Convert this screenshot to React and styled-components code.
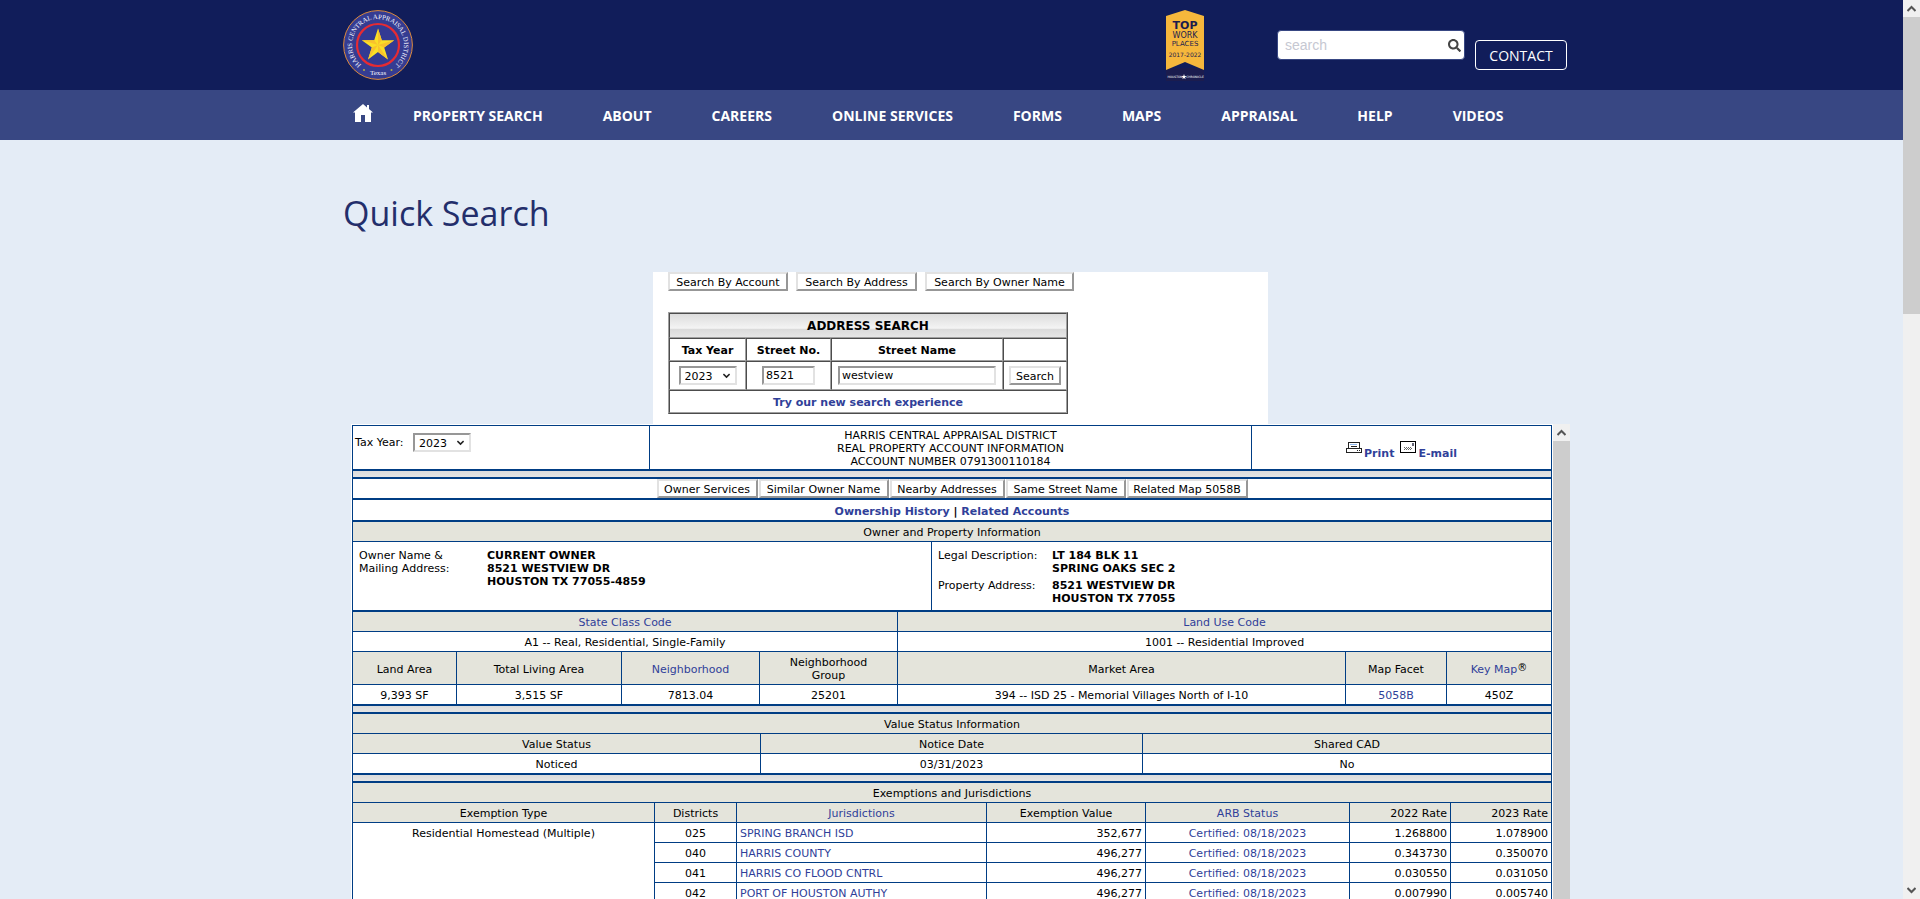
import styled, { createGlobalStyle } from "styled-components"
import { FaSearch } from "react-icons/fa"

const navy = "#111d5a"
const indigo = "#384783"
const sky = "#e4ecf6"
const line = "#003d84"
const sand = "#e4e4db"
const linkBlue = "#303f99"
const verdana = "Verdana, \"DejaVu Sans\", sans-serif"
const openSans = "\"Open Sans\", sans-serif"

const GlobalStyle = createGlobalStyle`
	* {
		box-sizing: border-box;
	}
	html, body, #root {
		height: 100%;
		margin: 0;
	}
	body {
		overflow: hidden;
		background: ${sky};
	}
	a {
		text-decoration: none;
	}
`

const Window = styled.div`
	display: flex;
	height: 100%;
	overflow: hidden;
`

const Page = styled.div`
	flex: 1;
	min-width: 0;
	overflow: hidden;
	font-family: ${openSans};
`

const Container = styled.div`
	display: flex;
	width: 1217px;
	max-width: 100%;
	margin: 0 auto;
`

const TopBar = styled.header`
	background: ${navy};
`

const TopInner = styled(Container)`
	height: 90px;
	padding-top: 10px;
	align-items: flex-start;
`

const TopTools = styled.div`
	display: flex;
	flex: 1;
	justify-content: flex-end;
	align-items: flex-start;
	margin-right: -7px;
`

const SearchForm = styled.form`
	display: flex;
	align-items: center;
	width: 188px;
	height: 30px;
	margin: 20px 10px 0 72px;
	padding: 0 3px 0 7px;
	border: 1px solid ${indigo};
	border-radius: 4px;
	background: #fff;
`

const SearchInput = styled.input`
	flex: 1;
	min-width: 0;
	padding: 0;
	border: 0;
	outline: 0;
	background: none;
	font: 14px/20px "Liberation Sans", Arial, sans-serif;

	&::placeholder {
		color: #c6c8d2;
	}
`

const IconButton = styled.button`
	display: flex;
	padding: 0;
	border: 0;
	background: none;
	color: #444;
	font-size: 13px;
`

const ContactLink = styled.a`
	width: 92px;
	height: 30px;
	margin-top: 30px;
	border: 1px solid #fff;
	border-radius: 4px;
	color: #fff;
	font-size: 14px;
	line-height: 30px;
	text-align: center;
`

const NavBar = styled.nav`
	background: ${indigo};
`

const NavInner = styled(Container)`
	height: 50px;
	padding: 2px 0 0 10px;
	gap: 60px;
	align-items: center;
`

const NavLink = styled.a`
	color: #fff;
	font-size: 14px;
	font-weight: 700;
	line-height: 20px;
	white-space: nowrap;
`

const HomeLink = styled.a`
	display: flex;
	margin: 0 -20px 6px 0;
`

const Main = styled.main`
	width: 1217px;
	max-width: 100%;
	margin: 0 auto;
`

const Title = styled.h1`
	margin: 0;
	padding: 49px 0 35px;
	color: #232e6b;
	font-size: 34px;
	font-weight: 400;
	line-height: 48px;
`

const Content = styled.div`
	width: 1219px;
	margin-left: 8px;
	font: 11px/13px ${verdana};
	color: #000;
`

const SearchPanel = styled.section`
	width: 615px;
	height: 152px;
	margin: 0 auto;
	padding: 0 15px;
	background: #fff;
`

const ModeButtons = styled.div`
	display: flex;
	gap: 8px;
	margin-bottom: 21px;
`

const OutsetButton = styled.button`
	width: ${(p) => p.$width}px;
	height: 19px;
	padding: 1px 0 0;
	border: 2px solid;
	border-color: #e2e2e2 #979797 #979797 #e2e2e2;
	background: #fff;
	color: #000;
	font: 11px/13px ${verdana};
	white-space: nowrap;
`

const SearchTable = styled.table`
	width: 400px;
	border-collapse: separate;
	border-spacing: 0;
	border: 1px solid;
	border-color: #a0a0a0 #4c4c4c #4c4c4c #a0a0a0;
	table-layout: fixed;
	text-align: center;

	th, td {
		height: 23px;
		padding: 1px 0 0;
		border: 1px solid;
		border-color: #4c4c4c #a0a0a0 #a0a0a0 #4c4c4c;
	}
	tr:first-child th {
		height: 25px;
		background: linear-gradient(#dcdcdc, #f4f4f4 62%, #dadada 66%, #e6e6e6);
		font-size: 12px;
	}
	tr:nth-child(3) td {
		height: 29px;
		padding: 0;
	}
`

const SelectBox = styled.span`
	position: relative;
	display: inline-block;
	width: 58px;
	height: 19px;
	vertical-align: middle;

	svg {
		position: absolute;
		top: 7px;
		right: 7px;
		pointer-events: none;
	}
`

const YearSelect = styled.select`
	appearance: none;
	width: 100%;
	height: 100%;
	padding: 1px 0 0 4px;
	border: 2px solid;
	border-color: #979797 #e2e2e2 #e2e2e2 #979797;
	border-radius: 0;
	background: #fff;
	color: #000;
	font: 11px/13px ${verdana};
	vertical-align: top;
`

const TextBox = styled.input`
	width: ${(p) => p.$width}px;
	height: 19px;
	padding: 0 2px;
	border: 2px solid;
	border-color: #979797 #e2e2e2 #e2e2e2 #979797;
	color: #000;
	font: 11px/13px ${verdana};
	vertical-align: middle;
`

const TextLink = styled.a`
	color: ${linkBlue};
	font-weight: ${(p) => (p.$bold ? 700 : 400)};
`

const Frame = styled.section`
	display: flex;
	background: #fff;
`

const Sheet = styled.div`
	flex: 1;
	min-width: 0;
	margin: 1px;
	border: 1px solid ${line};
	border-bottom: 0;
`

const Grid = styled.table`
	width: 100%;
	table-layout: fixed;
	border-collapse: separate;
	border-spacing: 0;
	border-bottom: 1px solid ${line};

	th, td {
		padding: 4px 3px 2px;
		border-bottom: 1px solid ${line};
		border-right: 1px solid ${line};
		font-weight: 400;
		text-align: center;
	}
	th {
		background: ${sand};
	}
	th:last-child, td:last-child {
		border-right: 0;
	}
`

const Cell = styled.td`
	&& {
		text-align: ${(p) => p.$align};
		vertical-align: top;
	}
`

const HeadCell = styled.th`
	&& {
		text-align: right;
	}
`

const Mark = styled.sup`
	font-size: 10px;
	line-height: 0;
	vertical-align: 2px;
`

const Spacer = styled.div`
	height: 8px;
	border-bottom: 2px solid ${line};
	background: linear-gradient(#dcdcdc, #e4e4e4);
`

const HeaderRow = styled.div`
	display: flex;
	height: 45px;
	border-bottom: 2px solid ${line};
	text-align: center;
`

const YearField = styled.div`
	display: flex;
	width: 297px;
	padding: 7px 2px 0;
	align-items: flex-start;
	border-right: 1px solid ${line};

	label {
		width: 58px;
		line-height: 20px;
		text-align: left;
	}
`

const Heading = styled.div`
	flex: 1;
	padding-top: 3px;
	border-right: 1px solid ${line};
`

const Actions = styled.div`
	display: flex;
	width: 299px;
	padding-top: 15px;
	justify-content: center;
	gap: 6px;

	a {
		display: flex;
		align-items: flex-start;
		gap: 2px;
		color: ${linkBlue};
		font-weight: 700;
	}
	span {
		padding-top: 6px;
	}
`

const ButtonRow = styled.div`
	display: flex;
	height: 21px;
	justify-content: center;
	gap: 1px;
	border-bottom: 2px solid ${line};
`

const LinkRow = styled.div`
	height: 22px;
	padding-top: 5px;
	border-bottom: 2px solid ${line};
	text-align: center;
	font-weight: 700;
`

const SectionTitle = styled.div`
	height: 20px;
	padding-top: 4px;
	border-bottom: 1px solid ${line};
	background: ${sand};
	text-align: center;
`

const OwnerRow = styled.div`
	display: flex;
	height: 70px;
	border-bottom: 2px solid ${line};
`

const Facts = styled.dl`
	display: grid;
	grid-template-columns: ${(p) => p.$label}px 1fr;
	width: ${(p) => p.$width};
	margin: 0;
	padding: 7px 6px;
	row-gap: 4px;
	align-content: start;
	border-right: ${(p) => (p.$divided ? `1px solid ${line}` : 0)};

	dd {
		margin: 0;
		font-weight: 700;
	}
`

const ScrollTrack = styled.div`
	display: flex;
	flex-direction: column;
	width: 17px;
	flex-shrink: 0;
	background: #f0f0f0;
`

const ScrollEnd = styled.div`
	display: flex;
	height: 17px;
	align-items: center;
	justify-content: center;
`

const Thumb = styled.div`
	flex: ${(p) => p.$size};
	background: #cdcdcd;
`

const Gap = styled.div`
	flex: ${(p) => p.$size};
`

const NAV = ["Property Search", "About", "Careers", "Online Services", "Forms", "Maps", "Appraisal", "Help", "Videos"]

const MODES = [["Search By Account", 120], ["Search By Address", 121], ["Search By Owner Name", 149]]

const TOOLS = [
	["Owner Services", 101],
	["Similar Owner Name", 130],
	["Nearby Addresses", 115],
	["Same Street Name", 120],
	["Related Map 5058B", 121]
]

const DISTRICTS = [
	["025", "SPRING BRANCH ISD", "352,677", "1.268800", "1.078900"],
	["040", "HARRIS COUNTY", "496,277", "0.343730", "0.350070"],
	["041", "HARRIS CO FLOOD CNTRL", "496,277", "0.030550", "0.031050"],
	["042", "PORT OF HOUSTON AUTHY", "496,277", "0.007990", "0.005740"]
]

function Seal() {
	return (
		<svg width="70" height="70" viewBox="0 0 70 70" role="img" aria-label="Harris Central Appraisal District, Texas">
			<defs>
				<path id="ring" d="M19.7 56A26 26 0 1 1 50.3 56" />
			</defs>
			<circle cx="35" cy="35" r="34.4" fill="#353c92" stroke="#dd8a3c" strokeWidth="1" />
			<circle cx="35" cy="35" r="21" fill="#333a93" stroke="#e62b33" strokeWidth="2.2" />
			<path d="M35 18.5l3.8 11.8h12.4l-10 7.3 3.8 11.8-10-7.3-10 7.3 3.8-11.8-10-7.3h12.4z" fill="#fbdf26" />
			<path d="M35 18.5V35l3.8-4.7zM51.2 30.3L35 35l6.2 2.6zM45 49.4L35 35v7.1zM25 49.4L35 35l-6.2 2.6zM18.8 30.3L35 35l-3.8-4.7z" fill="#f9c22c" />
			<text fill="#f4f5ff" fontSize="6.7" fontFamily="Liberation Serif, serif">
				<textPath href="#ring" startOffset="50%" textAnchor="middle">HARRIS CENTRAL APPRAISAL DISTRICT</textPath>
			</text>
			<text x="35" y="65" fill="#f4f5ff" fontSize="7" fontFamily="Liberation Serif, serif" textAnchor="middle">Texas</text>
			<circle cx="21" cy="60" r="1" fill="#b3b343" />
			<circle cx="48.5" cy="60" r="1" fill="#b3b343" />
		</svg>
	)
}

function AwardBadge() {
	return (
		<svg width="40" height="72" viewBox="0 0 40 72" fill="#1b1c4e" textAnchor="middle" fontFamily="DejaVu Sans, sans-serif">
			<path d="M1 58h38v13H1z" />
			<path d="M1 6L20 0l19 6v54l-19-8-19 8z" fill="#f6b73c" />
			<text x="20" y="19" fontSize="11" fontWeight="700">TOP</text>
			<text x="20" y="28" fontSize="8">WORK</text>
			<text x="20" y="36" fontSize="7">PLACES</text>
			<text x="20" y="47" fontSize="6">2017-2022</text>
			<text x="10" y="68" fontSize="3" fill="#fff">HOUSTON</text>
			<text x="30" y="68" fontSize="3" fill="#fff">CHRONICLE</text>
			<path d="M19 64l.7 2h2l-1.7 1.2.6 2-1.6-1.2-1.6 1.2.6-2-1.7-1.2h2z" fill="#fff" />
		</svg>
	)
}

function HomeIcon() {
	return (
		<svg width="20" height="18" viewBox="0 0 20 18" fill="#fff">
			<path d="M10 0L0 8.500h2V18h6v-7h4v7h6V8.500h2L16 5V1h-2v2.400z" />
		</svg>
	)
}

function PrinterIcon() {
	return (
		<svg width="16" height="12" viewBox="0 0 16 12" shapeRendering="crispEdges">
			<path d="M2 1h12v6H2z" fill="#222" />
			<path d="M3 2h10v5H3z" fill="#fff" />
			<path d="M0 7h16v5H0z" fill="#222" />
			<path d="M1 8h14v3H1z" fill="#fff" />
			<path d="M4 3h7v1H4z" fill="#8fb9f0" />
			<path d="M5 5h6v1H5zM11 9h1v1h-1zM13 9h1v1h-1z" fill="#222" />
		</svg>
	)
}

function MailIcon() {
	return (
		<svg width="16" height="12" viewBox="0 0 16 12" shapeRendering="crispEdges">
			<path d="M0 0h16v12H0z" />
			<path d="M1 1h14v10H1z" fill="#fff" />
			<path d="M12 2h2v3h-2z" fill="#667" />
			<path d="M4 6.500h7M5 7.500h7M4 8.500h7" stroke="#666" strokeDasharray="1 1" />
		</svg>
	)
}

function Chevron({ down, small }) {
	return (
		<svg width={small ? 7 : 9} height={small ? 6 : 7} viewBox="0 0 9 7" fill="none" stroke={small ? "#222" : "#555"} strokeWidth="2">
			<path d={down ? "M.500 1l4 4 4-4" : "M.500 6l4-4 4 4"} />
		</svg>
	)
}

function ScrollBar({ thumb, rest }) {
	return (
		<ScrollTrack aria-hidden="true">
			<ScrollEnd><Chevron /></ScrollEnd>
			<Thumb $size={thumb} />
			<Gap $size={rest} />
			{rest > 0 && <ScrollEnd><Chevron down /></ScrollEnd>}
		</ScrollTrack>
	)
}

function Year({ id }) {
	return (
		<SelectBox>
			<YearSelect id={id}><option>2023</option></YearSelect>
			<Chevron down small />
		</SelectBox>
	)
}

function Columns({ widths }) {
	return (
		<colgroup>
			{widths.map((w, i) => <col key={i} width={w || undefined} />)}
		</colgroup>
	)
}

function AddressSearch() {
	return (
		<SearchPanel>
			<ModeButtons>
				{MODES.map(([name, width]) => <OutsetButton key={name} $width={width}>{name}</OutsetButton>)}
			</ModeButtons>
			<SearchTable>
				<Columns widths={[77, 85, 172, 0]} />
				<tbody>
					<tr><th colSpan={4}>ADDRESS SEARCH</th></tr>
					<tr>
						<th><label htmlFor="year">Tax Year</label></th>
						<th><label htmlFor="number">Street No.</label></th>
						<th><label htmlFor="street">Street Name</label></th>
						<th />
					</tr>
					<tr>
						<td><Year id="year" /></td>
						<td><TextBox id="number" $width={53} defaultValue="8521" /></td>
						<td><TextBox id="street" $width={158} defaultValue="westview" /></td>
						<td><OutsetButton $width={52}>Search</OutsetButton></td>
					</tr>
					<tr><td colSpan={4}><TextLink href="#" $bold>Try our new search experience</TextLink></td></tr>
				</tbody>
			</SearchTable>
		</SearchPanel>
	)
}

function AccountSheet() {
	return (
		<Sheet>
			<HeaderRow>
				<YearField>
					<label htmlFor="account-year">Tax Year:</label>
					<Year id="account-year" />
				</YearField>
				<Heading>
					HARRIS CENTRAL APPRAISAL DISTRICT<br />
					REAL PROPERTY ACCOUNT INFORMATION<br />
					ACCOUNT NUMBER 0791300110184
				</Heading>
				<Actions>
					<a href="#"><PrinterIcon /><span>Print</span></a>
					<a href="#"><MailIcon /><span>E-mail</span></a>
				</Actions>
			</HeaderRow>
			<Spacer />
			<ButtonRow>
				{TOOLS.map(([name, width]) => <OutsetButton key={name} $width={width}>{name}</OutsetButton>)}
			</ButtonRow>
			<LinkRow>
				<TextLink href="#" $bold>Ownership History</TextLink> | <TextLink href="#" $bold>Related Accounts</TextLink>
			</LinkRow>
			<SectionTitle>Owner and Property Information</SectionTitle>
			<OwnerRow>
				<Facts $label={128} $width="579px" $divided>
					<dt>Owner Name &amp;<br />Mailing Address:</dt>
					<dd>CURRENT OWNER<br />8521 WESTVIEW DR<br />HOUSTON TX 77055-4859</dd>
				</Facts>
				<Facts $label={114} $width="auto">
					<dt>Legal Description:</dt>
					<dd>LT 184 BLK 11<br />SPRING OAKS SEC 2</dd>
					<dt>Property Address:</dt>
					<dd>8521 WESTVIEW DR<br />HOUSTON TX 77055</dd>
				</Facts>
			</OwnerRow>
			<Grid>
				<Columns widths={[104, 165, 138, 138, 0, 101, 104]} />
				<tbody>
					<tr>
						<th colSpan={4}><TextLink href="#">State Class Code</TextLink></th>
						<th colSpan={3}><TextLink href="#">Land Use Code</TextLink></th>
					</tr>
					<tr>
						<td colSpan={4}>A1 -- Real, Residential, Single-Family</td>
						<td colSpan={3}>1001 -- Residential Improved</td>
					</tr>
					<tr>
						<th>Land Area</th>
						<th>Total Living Area</th>
						<th><TextLink href="#">Neighborhood</TextLink></th>
						<th>Neighborhood<br />Group</th>
						<th>Market Area</th>
						<th>Map Facet</th>
						<th><TextLink href="#">Key Map</TextLink><Mark>®</Mark></th>
					</tr>
					<tr>
						<td>9,393 SF</td>
						<td>3,515 SF</td>
						<td>7813.04</td>
						<td>25201</td>
						<td>394 -- ISD 25 - Memorial Villages North of I-10</td>
						<td><TextLink href="#">5058B</TextLink></td>
						<td>450Z</td>
					</tr>
				</tbody>
			</Grid>
			<Spacer />
			<SectionTitle>Value Status Information</SectionTitle>
			<Grid>
				<Columns widths={[408, 382, 0]} />
				<tbody>
					<tr><th>Value Status</th><th>Notice Date</th><th>Shared CAD</th></tr>
					<tr><td>Noticed</td><td>03/31/2023</td><td>No</td></tr>
				</tbody>
			</Grid>
			<Spacer />
			<SectionTitle>Exemptions and Jurisdictions</SectionTitle>
			<Grid>
				<Columns widths={[302, 82, 250, 159, 204, 101, 0]} />
				<tbody>
					<tr>
						<th>Exemption Type</th>
						<th>Districts</th>
						<th><TextLink href="#">Jurisdictions</TextLink></th>
						<th>Exemption Value</th>
						<th><TextLink href="#">ARB Status</TextLink></th>
						<HeadCell>2022 Rate</HeadCell>
						<HeadCell>2023 Rate</HeadCell>
					</tr>
					{DISTRICTS.map(([code, name, value, rate22, rate23], i) => (
						<tr key={code}>
							{i === 0 && <Cell rowSpan={DISTRICTS.length} $align="center">Residential Homestead (Multiple)</Cell>}
							<td>{code}</td>
							<Cell $align="left"><TextLink href="#">{name}</TextLink></Cell>
							<Cell $align="right">{value}</Cell>
							<td><TextLink href="#">Certified: 08/18/2023</TextLink></td>
							<Cell $align="right">{rate22}</Cell>
							<Cell $align="right">{rate23}</Cell>
						</tr>
					))}
				</tbody>
			</Grid>
		</Sheet>
	)
}

export default function App() {
	return (
		<>
			<GlobalStyle />
			<Window>
				<Page>
					<TopBar>
						<TopInner>
							<a href="#"><Seal /></a>
							<TopTools>
								<AwardBadge />
								<SearchForm role="search">
									<SearchInput aria-label="search" placeholder="search" />
									<IconButton type="button" aria-label="Search"><FaSearch /></IconButton>
								</SearchForm>
								<ContactLink href="#">CONTACT</ContactLink>
							</TopTools>
						</TopInner>
					</TopBar>
					<NavBar>
						<NavInner>
							<HomeLink href="#" aria-label="Home"><HomeIcon /></HomeLink>
							{NAV.map((n) => <NavLink key={n} href="#">{n.toUpperCase()}</NavLink>)}
						</NavInner>
					</NavBar>
					<Main>
						<Title>Quick Search</Title>
						<Content>
							<AddressSearch />
							<Frame>
								<AccountSheet />
								<ScrollBar thumb={1} rest={0} />
							</Frame>
						</Content>
					</Main>
				</Page>
				<ScrollBar thumb={297} rest={568} />
			</Window>
		</>
	)
}
